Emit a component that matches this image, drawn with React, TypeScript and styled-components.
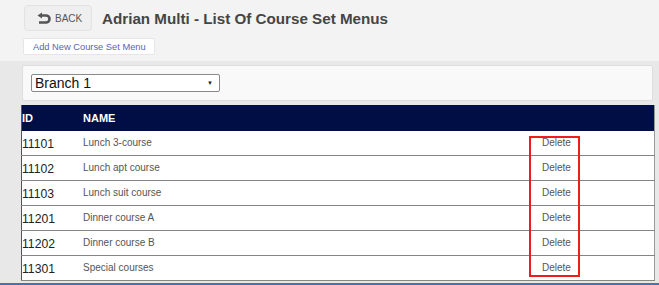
import React from "react";
import styled, { createGlobalStyle } from "styled-components";

const GlobalStyle = createGlobalStyle`
  html, body {
    margin: 0;
    padding: 0;
    background: #f3f3f3;
    font-family: "Liberation Sans", Arial, sans-serif;
    overflow: hidden;
  }
`;

const rows = [
  { id: "11101", name: "Lunch 3-course" },
  { id: "11102", name: "Lunch apt course" },
  { id: "11103", name: "Lunch suit course" },
  { id: "11201", name: "Dinner course A" },
  { id: "11202", name: "Dinner course B" },
  { id: "11301", name: "Special courses" },
];

const App: React.FC = () => {
  return (
    <Page>
      <GlobalStyle />
      <Header>
        <BackButton>
          <svg width="14" height="12" viewBox="0 0 14 12">
            <path d="M5 0.5 L0.5 3.5 L5 6.5 Z" fill="#555" />
            <path
              d="M4 3.5 H9 A3.5 3.5 0 0 1 9 10.5 H2"
              fill="none"
              stroke="#555"
              strokeWidth="2.6"
            />
          </svg>
          BACK
        </BackButton>
        <Title>Adrian Multi - List Of Course Set Menus</Title>
      </Header>
      <AddButton>Add New Course Set Menu</AddButton>
      <Content>
        <FilterPanel>
          <BranchSelect>
            <span>Branch 1</span>
            <Caret>▼</Caret>
          </BranchSelect>
        </FilterPanel>
        <TableWrap>
          <Table>
            <thead>
              <tr>
                <Th $w={61}>ID</Th>
                <Th>NAME</Th>
                <Th $w={121}></Th>
              </tr>
            </thead>
            <tbody>
              {rows.map((r) => (
                <tr key={r.id}>
                  <IdCell>{r.id}</IdCell>
                  <NameCell>{r.name}</NameCell>
                  <ActionCell>Delete</ActionCell>
                </tr>
              ))}
            </tbody>
          </Table>
          <Highlight />
        </TableWrap>
      </Content>
      <Footer />
    </Page>
  );
};

export default App;

const Page = styled.div`
  width: 659px;
  height: 285px;
  display: flex;
  flex-direction: column;
  overflow: hidden;
  > * {
    flex-shrink: 0;
  }
`;

const Header = styled.div`
  display: flex;
  align-items: center;
  padding: 5px 0 0 24px;
  gap: 10px;
`;

const BackButton = styled.button`
  display: flex;
  align-items: center;
  gap: 4px;
  box-sizing: border-box;
  width: 68px;
  height: 26px;
  padding: 0 0 0 12px;
  background: #efefef;
  border: 1px solid #e2e2e2;
  border-radius: 4px;
  font-family: inherit;
  font-size: 10px;
  color: #555;
  cursor: pointer;
`;

const Title = styled.h1`
  margin: 0;
  font-size: 15.2px;
  font-weight: 700;
  color: #454545;
`;

const AddButton = styled.button`
  align-self: flex-start;
  box-sizing: border-box;
  margin: 7px 0 0 23px;
  width: 132px;
  height: 17px;
  padding: 0 0 0 9px;
  text-align: left;
  background: #fff;
  border: 1px solid #e6e6e6;
  border-radius: 2px;
  font-family: inherit;
  font-size: 9.3px;
  color: #5a64b6;
`;

const Content = styled.div`
  margin-top: 6px;
  background: #e8e8e8;
  padding: 4px 5px 0 21px;
  flex: 1 0 auto;
  display: flex;
  flex-direction: column;
  gap: 4px;
  > * {
    flex-shrink: 0;
  }
`;

const FilterPanel = styled.div`
  box-sizing: border-box;
  height: 36px;
  margin-left: 1px;
  margin-right: 1px;
  background: #f9f9f9;
  border: 1px solid #dedede;
  border-radius: 2px;
  padding: 8px 0 0 8px;
`;

const BranchSelect = styled.div`
  box-sizing: border-box;
  width: 189px;
  height: 18px;
  display: flex;
  align-items: center;
  justify-content: space-between;
  padding: 0 6px 0 3px;
  background: #fff;
  border: 1px solid #8a8a8a;
  border-radius: 2px;
  font-size: 14px;
  color: #111;
`;

const Caret = styled.span`
  font-size: 6px;
  color: #222;
`;

const TableWrap = styled.div`
  position: relative;
`;

const Table = styled.table`
  width: 634px;
  border-collapse: collapse;
  background: #fff;
  border-left: 1px solid #555;
  border-right: 1px solid #999;
  table-layout: fixed;
`;

const Th = styled.th<{ $w?: number }>`
  width: ${(p) => (p.$w ? `${p.$w}px` : "auto")};
  height: 26px;
  padding: 0;
  background: #000e46;
  color: #fff;
  font-size: 11px;
  font-weight: 700;
  text-align: left;
`;

const Cell = styled.td`
  height: 24px;
  padding: 0;
  border-bottom: 1px solid #858585;
  font-size: 10px;
  color: #555;
  line-height: 12px;
`;

const IdCell = styled(Cell)`
  height: 22px;
  padding-top: 2px;
  font-size: 12.2px;
  color: #222;
`;

const NameCell = styled(Cell)``;

const ActionCell = styled(Cell)`
  padding-left: 9px;
`;

const Highlight = styled.div`
  position: absolute;
  left: 508px;
  top: 31px;
  width: 51px;
  height: 141px;
  box-sizing: border-box;
  border: 2px solid #ee1c1c;
  pointer-events: none;
`;

const Footer = styled.div`
  height: 2px;
  background: #4373b5;
`;
